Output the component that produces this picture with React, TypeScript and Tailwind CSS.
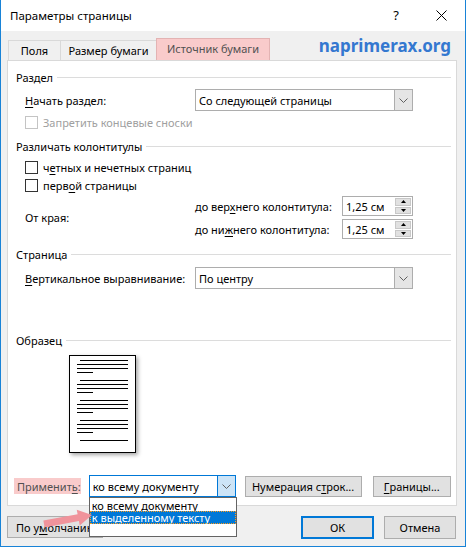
import React from 'react';

// Диалог «Параметры страницы» · вкладка «Источник бумаги»

function U({ children }: { children: React.ReactNode }) {
  return <span className="underline underline-offset-2 decoration-1">{children}</span>;
}

function Chevron() {
  return (
    <svg width="9" height="5" viewBox="0 0 9 5" className="block">
      <polyline points="0.5,0.5 4.5,4.5 8.5,0.5" fill="none" stroke="#606060" strokeWidth="1" />
    </svg>
  );
}

function Section({ title, className }: { title: string; className: string }) {
  return (
    <div className={`flex items-center h-[16px] ${className}`}>
      <span>{title}</span>
      <div className="flex-1 h-px bg-[#dcdcdc] ml-[4px]" />
    </div>
  );
}

function Select({ value }: { value: string }) {
  return (
    <div className="flex w-[218px] h-[22px] border border-[#adadad] bg-white">
      <div className="flex-1 flex items-center pl-[3px]">{value}</div>
      <div className="w-[18px] flex items-center justify-center bg-[#e5e5e5] border-l border-[#adadad]">
        <Chevron />
      </div>
    </div>
  );
}

function Checkbox({ disabled }: { disabled?: boolean }) {
  return (
    <div
      className={`w-[13px] h-[13px] shrink-0 bg-white border ${disabled ? 'border-[#c4c4c4]' : 'border-[#333333]'}`}
    />
  );
}

function Spin({ value }: { value: string }) {
  return (
    <div className="flex w-[71px] h-[20px] border border-[#adadad] bg-white">
      <div className="flex-1 flex items-center pl-[3px]">{value}</div>
      <div className="w-[17px] flex flex-col py-[1px] pr-[1px] gap-[1px]">
        <div className="flex-1 flex items-center justify-center bg-[#e1e1e1] border border-[#c8c8c8]">
          <svg width="5" height="3" viewBox="0 0 5 3" className="block">
            <polygon points="2.5,0 5,3 0,3" fill="#000" />
          </svg>
        </div>
        <div className="flex-1 flex items-center justify-center bg-[#e1e1e1] border border-[#c8c8c8]">
          <svg width="5" height="3" viewBox="0 0 5 3" className="block">
            <polygon points="0,0 5,0 2.5,3" fill="#000" />
          </svg>
        </div>
      </div>
    </div>
  );
}

function SamplePage() {
  const groups = [0, 20, 40, 60];
  return (
    <div className="ml-[53px] mt-[7px] w-[67px] h-[98px] border border-black bg-white shadow-[2px_2px_4px_rgba(0,0,0,0.35)]">
      <svg width="65" height="96" viewBox="0 0 65 96" className="block">
        {groups.map((g) => (
          <g key={g} stroke="#000" strokeWidth="1">
            <line x1="10" y1={4.5 + g} x2="58" y2={4.5 + g} />
            <line x1="7" y1={8.5 + g} x2="58" y2={8.5 + g} />
            <line x1="7" y1={12.5 + g} x2="58" y2={12.5 + g} />
            <line x1="7" y1={16.5 + g} x2="23" y2={16.5 + g} />
          </g>
        ))}
        <line x1="10" y1="84.5" x2="58" y2="84.5" stroke="#000" strokeWidth="1" />
      </svg>
    </div>
  );
}

export default function App() {
  return (
    <div className="relative w-[466px] h-[547px] bg-[#f0f0f0] border-x border-b border-[#1883d7] overflow-hidden flex flex-col text-[11px] text-black font-['Segoe_UI','Noto_Sans',sans-serif] leading-none whitespace-nowrap">
      {/* Title bar */}
      <div className="h-[31px] shrink-0 bg-white flex items-center pl-[9px] pr-[18px] text-[11.5px]">
        <span>Параметры страницы</span>
        <span className="ml-auto text-[13px]">?</span>
        <svg width="11" height="11" viewBox="0 0 11 11" className="ml-[37px] block">
          <path d="M0.5 0.5 L10.5 10.5 M10.5 0.5 L0.5 10.5" stroke="#000" strokeWidth="1" />
        </svg>
      </div>

      {/* Tabs */}
      <div className="h-[29px] shrink-0 flex items-end pl-[7px] pr-[14px]">
        <div className="w-[52px] h-[20px] flex items-center justify-center border-t border-l border-[#d9d9d9]">
          Поля
        </div>
        <div className="w-[96px] h-[20px] flex items-center justify-center border-t border-l border-[#d9d9d9]">
          Размер бумаги
        </div>
        <div className="w-[114px] h-[22px] flex items-center justify-center bg-[#f9cbcb] border-t border-x border-[#e3b3b3] text-[#505050] pb-[2px]">
          Источник бумаги
        </div>
        <div className="ml-auto self-center text-[17px] font-bold text-[#3478d0]">
          naprimerax.org
        </div>
      </div>

      {/* Panel */}
      <div className="ml-[6px] w-[450px] h-[446px] shrink-0 bg-white border border-[#d9d9d9] flex flex-col pl-[8px] pr-[5px]">
        <Section title="Раздел" className="mt-[8px]" />

        <div className="mt-[4px] h-[22px] flex items-center pl-[9px]">
          <div className="w-[170px]">
            <U>Н</U>ачать раздел:
          </div>
          <Select value="Со следующей страницы" />
        </div>

        <div className="mt-[3px] h-[16px] flex items-center pl-[9px] gap-[5px] text-[#a0a0a0]">
          <Checkbox disabled />
          <span>Запретить концевые сноски</span>
        </div>

        <Section title="Различать колонтитулы" className="mt-[8px]" />

        <div className="mt-[5px] h-[16px] flex items-center pl-[9px] gap-[5px]">
          <Checkbox />
          <span>
            ч<U>е</U>тных и нечетных страниц
          </span>
        </div>
        <div className="mt-[2px] h-[16px] flex items-center pl-[9px] gap-[5px]">
          <Checkbox />
          <span>
            перв<U>о</U>й страницы
          </span>
        </div>

        <div className="mt-[3px] h-[43px] flex pl-[9px]">
          <div className="w-[170px] flex items-center">От края:</div>
          <div className="flex flex-col gap-[3px]">
            <div className="h-[20px] flex items-center">
              <div className="w-[147px]">
                до вер<U>х</U>него колонтитула:
              </div>
              <Spin value="1,25 см" />
            </div>
            <div className="h-[20px] flex items-center">
              <div className="w-[147px]">
                до ни<U>ж</U>него колонтитула:
              </div>
              <Spin value="1,25 см" />
            </div>
          </div>
        </div>

        <Section title="Страница" className="mt-[7px]" />

        <div className="mt-[5px] h-[22px] flex items-center pl-[9px]">
          <div className="w-[170px]">
            <U>В</U>ертикальное выравнивание:
          </div>
          <Select value="По центру" />
        </div>

        <Section title="Образец" className="mt-[43px]" />

        <SamplePage />

        <div className="mt-[22px] h-[22px] flex items-center">
          <div className="-ml-[2px] h-[16px] w-[67px] flex items-center pl-[3px] bg-[#f9cbcb] text-[#505050]">
            Применит<U>ь</U>:
          </div>
          <div className="relative ml-[8px] w-[148px] h-[22px] flex border border-[#0078d7] bg-white">
            <div className="flex-1 flex items-center pl-[3px]">ко всему документу</div>
            <div className="w-[18px] flex items-center justify-center bg-[#cce4f7] border-l border-[#0078d7]">
              <Chevron />
            </div>
            {/* open list */}
            <div className="absolute left-[-1px] top-[21px] w-[148px] h-[40px] border border-[#646464] bg-white z-10 flex flex-col pt-[1px]">
              <div className="h-[12px] flex items-center pl-[2px]">ко всему документу</div>
              <div className="h-[13px] flex items-center pl-[2px] bg-[#0078d7] text-white outline-1 outline-dotted outline-[#ff9c1a] -outline-offset-1">
                к выделенному тексту
              </div>
              <div className="flex-1" />
            </div>
          </div>
          <div className="ml-[9px] w-[118px] h-[21px] flex items-center justify-center bg-[#e1e1e1] border border-[#adadad]">
            Нумерация с<U>т</U>рок...
          </div>
          <div className="ml-[11px] w-[79px] h-[21px] flex items-center justify-center bg-[#e1e1e1] border border-[#adadad]">
            <U>Г</U>раницы...
          </div>
        </div>
      </div>

      {/* Bottom buttons */}
      <div className="flex items-start pl-[6px] pr-[9px] mt-[10px]">
        <div className="w-[96px] h-[22px] flex items-center pl-[8px] bg-[#e1e1e1] border border-[#adadad] overflow-hidden">
          По у<U>м</U>олчанию
        </div>
        <div className="ml-auto w-[73px] h-[23px] flex items-center justify-center bg-[#e1e1e1] border-2 border-[#0078d7]">
          ОК
        </div>
        <div className="ml-[10px] w-[72px] h-[23px] flex items-center justify-center bg-[#e1e1e1] border border-[#adadad]">
          Отмена
        </div>
      </div>

      {/* pointer arrow */}
      <svg width="55" height="25" viewBox="0 0 55 25" className="absolute left-[39px] top-[505px] z-20">
        <polygon
          points="3.36,15.56 37.6,9.14 36.77,4.72 52,10 39.71,20.44 38.88,16.02 4.64,22.44"
          fill="#f0939b"
        />
      </svg>
    </div>
  );
}
